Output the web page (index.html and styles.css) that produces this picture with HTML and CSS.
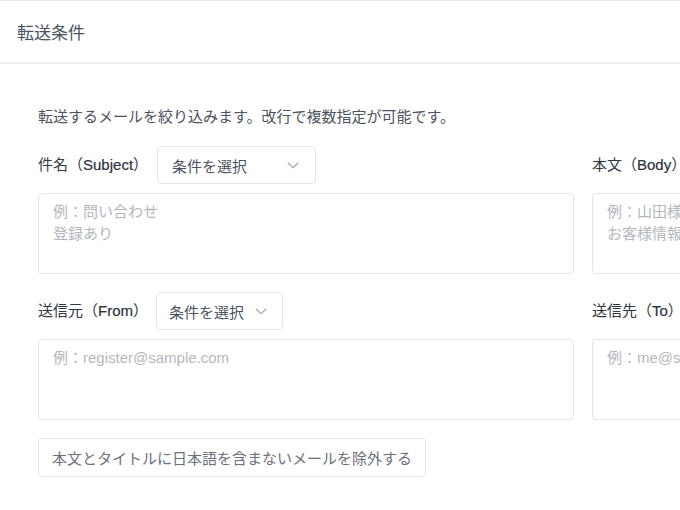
FILE: index.html
```html
<!DOCTYPE html>
<html lang="ja">
<head>
<meta charset="utf-8">
<title>転送条件</title>
<link rel="stylesheet" href="styles.css">
</head>
<body>
<section class="card">
  <header class="card-header">転送条件</header>
  <div class="card-body">
    <p class="desc">転送するメールを絞り込みます。改行で複数指定が可能です。</p>
    <div class="grid">
      <div class="field">
        <div class="field-head">
          <span class="label">件名（<span class="en">Subject</span>）</span>
          <button class="select select-wide" type="button"><span>条件を選択</span>
            <svg class="chev" width="12" height="7" viewBox="0 0 12 7"><polyline points="0.8,0.8 6,5.6 11.2,0.8" fill="none" stroke="#a3a8b0" stroke-width="1.2"/></svg>
          </button>
        </div>
        <textarea class="area" placeholder="例：問い合わせ&#10;登録あり"></textarea>
      </div>
      <div class="field">
        <div class="field-head">
          <span class="label">本文（<span class="en">Body</span>）</span>
          <button class="select" type="button"><span>条件を選択</span>
            <svg class="chev" width="12" height="7" viewBox="0 0 12 7"><polyline points="0.8,0.8 6,5.6 11.2,0.8" fill="none" stroke="#a3a8b0" stroke-width="1.2"/></svg>
          </button>
        </div>
        <textarea class="area" placeholder="例：山田様&#10;お客様情報"></textarea>
      </div>
      <div class="field">
        <div class="field-head">
          <span class="label">送信元（<span class="en">From</span>）</span>
          <button class="select" type="button"><span>条件を選択</span>
            <svg class="chev" width="12" height="7" viewBox="0 0 12 7"><polyline points="0.8,0.8 6,5.6 11.2,0.8" fill="none" stroke="#a3a8b0" stroke-width="1.2"/></svg>
          </button>
        </div>
        <textarea class="area" placeholder="例：register@sample.com"></textarea>
      </div>
      <div class="field">
        <div class="field-head">
          <span class="label">送信先（<span class="en">To</span>）</span>
          <button class="select" type="button"><span>条件を選択</span>
            <svg class="chev" width="12" height="7" viewBox="0 0 12 7"><polyline points="0.8,0.8 6,5.6 11.2,0.8" fill="none" stroke="#a3a8b0" stroke-width="1.2"/></svg>
          </button>
        </div>
        <textarea class="area" placeholder="例：me@sample.com"></textarea>
      </div>
    </div>
    <button class="toggle" type="button">本文とタイトルに日本語を含まないメールを除外する</button>
  </div>
</section>
</body>
</html>
```
FILE: styles.css
```css
html, body {
  margin: 0;
  padding: 0;
  background: #ffffff;
  overflow: hidden;
}
body {
  font-family: "Liberation Sans", "Noto Sans CJK JP", sans-serif;
  font-size: 15px;
  color: #374151;
}
.card {
  border-top: 1px solid #e7e7ee;
}
.card-header {
  height: 63px;
  box-sizing: border-box;
  display: flex;
  align-items: center;
  padding: 0 17px;
  border-bottom: 2px solid #f1f1f3;
  color: #4b5260;
  font-size: 17px;
}
.card-body {
  padding: 42px 38px 40px;
}
.desc {
  margin: 0;
  line-height: 22px;
  color: #4b5260;
}
.grid {
  margin-top: 18px;
  display: grid;
  grid-template-columns: 536px 536px;
  column-gap: 18px;
  row-gap: 18px;
}
.field {
  display: flex;
  flex-direction: column;
}
.field-head {
  display: flex;
  align-items: center;
  gap: 8px;
}
.label {
  color: #2f3644;
  white-space: nowrap;
  line-height: 20px;
  margin-top: -1px;
}
.en {
  color: #2b313c;
  -webkit-text-stroke: 0.2px #2b313c;
}
.select {
  height: 38px;
  box-sizing: border-box;
  display: flex;
  align-items: center;
  gap: 11px;
  padding: 0 15px 0 12px;
  background: #fff;
  border: 1px solid #e3e5e9;
  border-radius: 4px;
  font: inherit;
  color: #4b5260;
}
.select-wide {
  width: 159px;
  margin-left: 1px;
  justify-content: space-between;
  padding: 0 16px 0 14px;
}
.chev {
  display: block;
  flex-shrink: 0;
}
.area {
  margin-top: 9px;
  height: 81px;
  box-sizing: border-box;
  width: 100%;
  resize: none;
  padding: 7px 14px;
  border: 1px solid #e3e5e9;
  border-radius: 4px;
  font: inherit;
  line-height: 22px;
  color: #374151;
  background: #fff;
  outline: none;
}
.area::placeholder {
  color: #b3b7be;
}
.toggle {
  margin-top: 18px;
  height: 39px;
  box-sizing: border-box;
  padding: 0 13px;
  background: #fff;
  border: 1px solid #e3e5e9;
  border-radius: 4px;
  font: inherit;
  color: #6b717c;
}
```
